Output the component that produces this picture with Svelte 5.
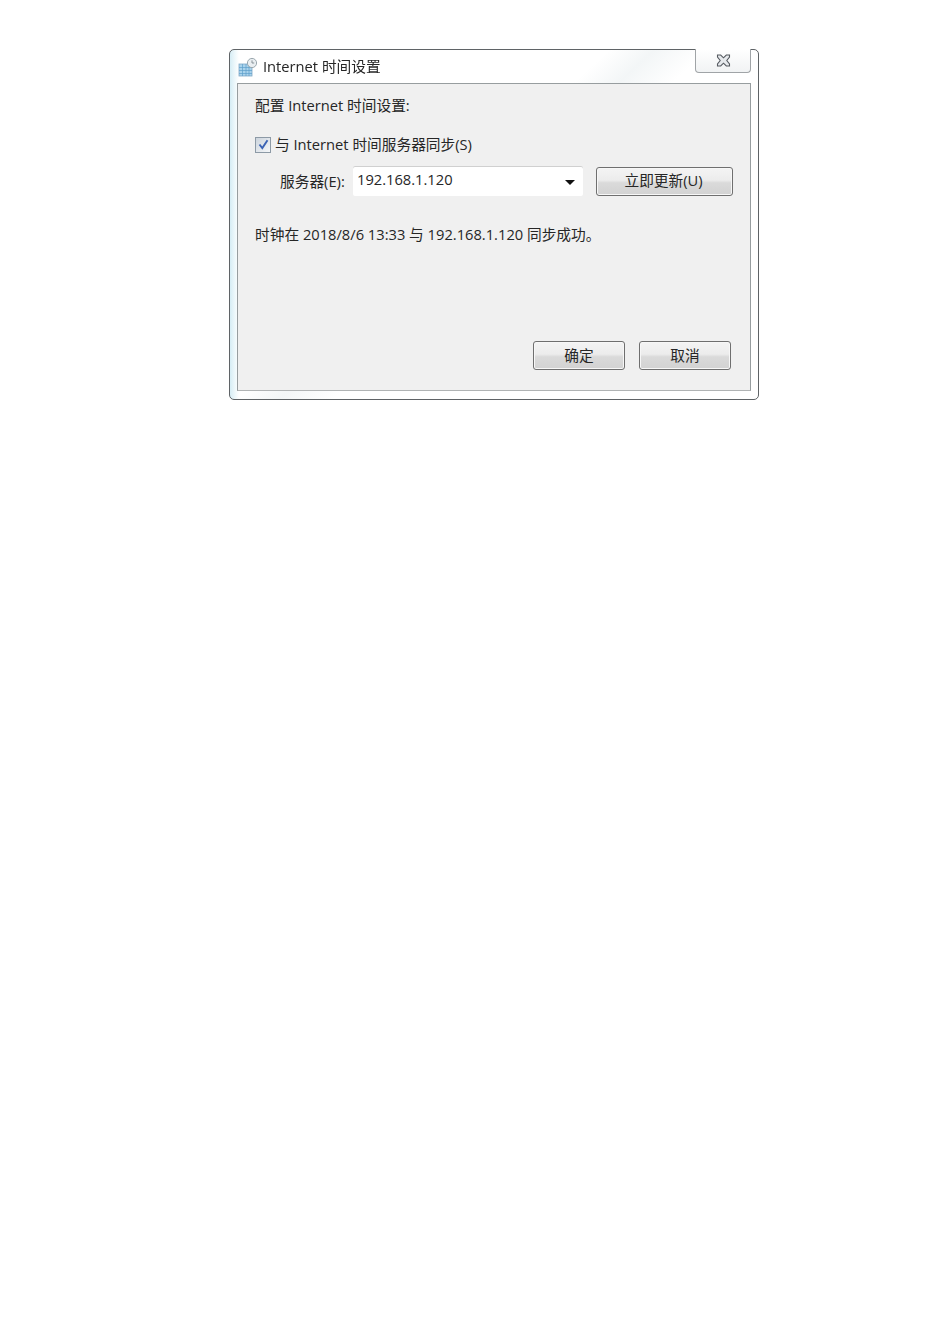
<script>
  const server = '192.168.1.120';
</script>

<div class="page">
  <div class="window">
    <div class="titlebar">
      <svg class="appicon" width="20" height="20" viewBox="0 0 20 20" aria-hidden="true">
        <rect x="1" y="7" width="13" height="12" fill="#a9d3ec" stroke="#7fa9c6" stroke-width="0.8"/>
        <path d="M1 10.5h13M1 13.5h13M1 16.5h13M4.5 7v12M8 7v12M11 7v12" stroke="#5f9fcb" stroke-width="0.7" fill="none"/>
        <circle cx="14" cy="6" r="4.6" fill="#e9eef1" stroke="#9aa7ae" stroke-width="1"/>
        <path d="M14 3.4V6h2.2" stroke="#7d8990" stroke-width="0.9" fill="none"/>
      </svg>
      <span class="title">Internet 时间设置</span>
      <button class="close" aria-label="关闭">
        <svg width="15" height="13" viewBox="0 0 15 13" aria-hidden="true">
          <path d="M1.5 1h3.2L7.5 3.8 10.3 1h3.2v2L10.8 6.5l2.7 3.5v2h-3.2L7.5 9.2 4.7 12H1.5v-2l2.7-3.5L1.5 3z" fill="#e6e9ec" stroke="#565b61" stroke-width="1.1"/>
        </svg>
      </button>
    </div>

    <div class="panel">
      <p class="heading">配置 Internet 时间设置:</p>

      <label class="sync">
        <span class="check">
          <svg width="11" height="11" viewBox="0 0 11 11" aria-hidden="true">
            <path d="M1.5 5.5l2.8 3.6L9.5 1.2" fill="none" stroke="#3b63b5" stroke-width="1.9"/>
          </svg>
        </span>
        <span class="sync-text">与 Internet 时间服务器同步(S)</span>
      </label>

      <div class="server">
        <span class="server-label">服务器(E):</span>
        <div class="combo">
          <span>{server}</span>
          <i class="arrow"></i>
        </div>
        <button class="btn update">立即更新(U)</button>
      </div>

      <p class="status">时钟在 2018/8/6 13:33 与 192.168.1.120 同步成功。</p>

      <div class="actions">
        <button class="btn ok">确定</button>
        <button class="btn cancel">取消</button>
      </div>
    </div>
  </div>
</div>

<style>
  :global(body) {
    margin: 0;
    background: #ffffff;
  }

  .page {
    height: 1344px;
    padding: 49px 0 0 229px;
    box-sizing: border-box;
    font-family: "Open Sans", "Noto Sans CJK SC", sans-serif;
    font-size: 14.7px;
    color: #262626;
    filter: blur(0.35px);
  }

  .window {
    width: 530px;
    height: 351px;
    box-sizing: border-box;
    padding: 0 7px 8px 7px;
    display: flex;
    flex-direction: column;
    border: 1px solid #5f6366;
    border-radius: 5px;
    background:
      linear-gradient(90deg, #d6edf5 0, #eef8fb 5px, rgba(255, 255, 255, 0) 9px),
      linear-gradient(137deg, #ffffff 0, #ffffff 42%, #f3f6f7 47%, #ffffff 53%, #ffffff 100%);
  }

  .titlebar {
    height: 33px;
    flex: none;
    display: flex;
    align-items: flex-start;
  }

  .appicon {
    margin: 7px 5px 0 1px;
    flex: none;
  }

  .title {
    margin-top: 6px;
    line-height: 21px;
  }

  .close {
    margin: -1px 0 0 auto;
    width: 56px;
    height: 24px;
    padding: 0;
    display: flex;
    align-items: center;
    justify-content: center;
    background: linear-gradient(#ffffff, #f1f3f4);
    border: 1px solid #a0a4a7;
    border-top: 0;
    border-radius: 0 0 4px 4px;
  }

  .panel {
    flex: 1;
    box-sizing: border-box;
    display: flex;
    flex-direction: column;
    padding: 11px 17px 20px 17px;
    background: #f0f0f0;
    border: 1px solid #979d9f;
    border-bottom-color: #b0b3b4;
  }

  p {
    margin: 0;
  }

  .heading {
    line-height: 21px;
  }

  .sync {
    margin-top: 18px;
    height: 21px;
    display: flex;
    align-items: center;
    gap: 4px;
  }

  .sync-text {
    margin-top: -2px;
  }

  .check {
    width: 14px;
    height: 14px;
    display: flex;
    align-items: center;
    justify-content: center;
    background: linear-gradient(135deg, #ccd4dd, #f5f7f9);
    border: 1px solid #8d9aa6;
  }

  .server {
    margin-top: 11px;
    display: flex;
    align-items: center;
    padding-left: 25px;
  }

  .server-label {
    width: 73px;
    flex: none;
    margin-top: -2px;
  }

  .combo {
    width: 230px;
    height: 30px;
    box-sizing: border-box;
    padding: 0 9px 4px 4px;
    display: flex;
    align-items: center;
    justify-content: space-between;
    background: #ffffff;
    border-radius: 2px;
    box-shadow: inset 0 1px 0 #d0d0d0;
  }

  .arrow {
    width: 0;
    height: 0;
    border-left: 5px solid transparent;
    border-right: 5px solid transparent;
    border-top: 5px solid #111;
    margin: 7px -1px 0 0;
  }

  .btn {
    height: 29px;
    padding: 0 0 3px;
    font: inherit;
    color: #262626;
    background: linear-gradient(#f4f4f4 0, #ececec 45%, #dadada 55%, #d2d2d2 100%);
    border: 1px solid #6f6f6f;
    border-radius: 3px;
    box-shadow: inset 0 0 0 1px #f7f7f7;
  }

  .update {
    width: 137px;
    margin-left: 13px;
    padding-right: 2px;
  }

  .status {
    margin-top: 28px;
    line-height: 21px;
  }

  .actions {
    margin-top: auto;
    display: flex;
    justify-content: flex-end;
    gap: 14px;
    padding-right: 2px;
  }

  .ok,
  .cancel {
    width: 92px;
  }
</style>
